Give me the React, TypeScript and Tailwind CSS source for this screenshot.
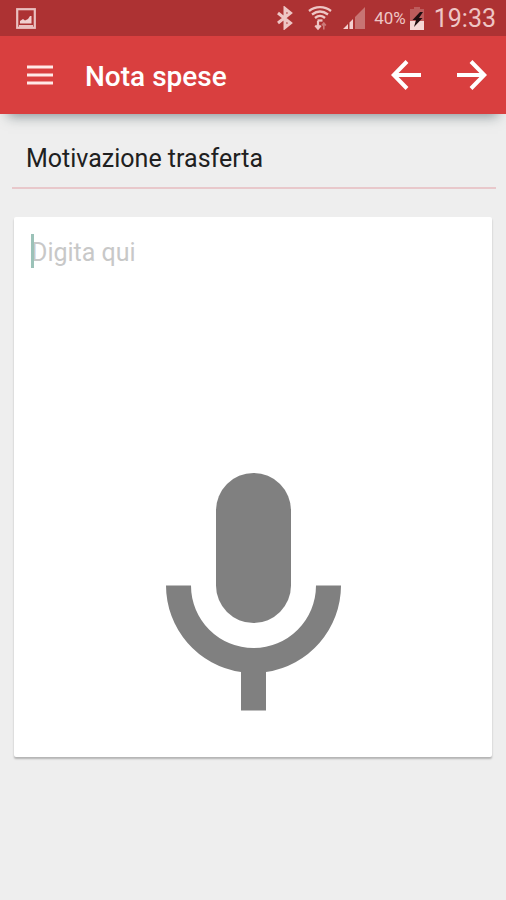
import { useState } from "react";

// Status bar icons
const PictureIcon = () => (
    <svg viewBox="0 0 20 21" className="w-5 h-[21px]" fill="none" aria-hidden="true">
        <rect x="1.2" y="1.2" width="17.6" height="18.6" stroke="#eac0c0" strokeWidth="2.2" />
        <path d="M4 15.500V13l3-2 2 1.500 3-1.500 2-3h1.500v7.500z" fill="#f0cfcf" />
        <path d="M3 18h14" stroke="#eac0c0" strokeWidth="2" />
    </svg>
);

const BluetoothIcon = () => (
    <svg viewBox="0 0 18 24" className="w-[18px] h-6" fill="none" stroke="#eec6c5" strokeWidth="3" aria-hidden="true">
        <path d="M2 7l12.500 10L9 21.500V2.500L14.500 7 2 17" />
    </svg>
);

const WifiIcon = () => (
    <svg viewBox="0 0 24 26" className="w-6 h-[26px]" fill="none" stroke="#eec6c5" strokeWidth="2.3" aria-hidden="true">
        <path d="M1 6C7.500 .8 16.500 .8 23 6" />
        <path d="M4 9.500C9 5.800 15 5.800 20 9.500" />
        <path d="M7 13C10 10.500 14 10.500 17 13" />
        <path d="M9.500 15.500h5" />
        <path d="M10 16v7M7.300 20.500l2.700 3 2.700-3" strokeWidth="2.200" />
        <path d="M15.800 24.500V19M13.800 20.500l2-2.500 2 2.500" stroke="#cc7a79" strokeWidth="1.600" />
    </svg>
);

const SignalIcon = () => (
    <svg viewBox="0 0 24 22" className="w-6 h-[22px]" aria-hidden="true">
        <path d="M13 22V10L23 0v22z" fill="#c87473" />
        <path d="M1 22l5-5v5zM7.500 22v-6.500l3.500-3.500v10z" fill="#f3d0cf" />
    </svg>
);

const BatteryIcon = () => (
    <svg viewBox="0 0 14 23" className="w-[14px] h-[23px]" aria-hidden="true">
        <path d="M4 0h6v2h4v21H0V2h4z" fill="#bd5c5c" />
        <path d="M0 14h14v9H0z" fill="#f6d8d7" />
        <path d="M10 5L2.500 13H6l-2 7 8.500-9H9l4-6z" fill="#1f0e10" />
    </svg>
);

// App bar icons
const MenuIcon = () => (
    <svg viewBox="0 0 26 20" className="w-[26px] h-5" fill="#ffe9e7" aria-hidden="true">
        <path d="M0 .5h26v3H0zM0 8.500h26v3H0zM0 16.500h26v3H0z" />
    </svg>
);

const ArrowIcon = ({ className = "" }: { className?: string }) => (
    <svg viewBox="0 0 30 30" className={`size-[30px] ${className}`} fill="none" stroke="#fff" strokeWidth="4" aria-hidden="true">
        <path d="M30 15H3M16 1.500L2.700 15l13.300 13.500" />
    </svg>
);

const MicIcon = () => (
    <svg viewBox="0 0 175 238" className="w-[175px] h-[238px]" fill="#808080" aria-hidden="true">
        <rect x="50" y="0" width="75" height="150" rx="37.500" />
        <path d="M0 112.500H25A62.500 62.500 0 0 0 150 112.500H175A87.500 87.500 0 0 1 100 199V237.500H75V199A87.500 87.500 0 0 1 0 112.500z" />
    </svg>
);

const StatusBar = () => (
    <div className="flex h-9 items-center bg-[#ad3233] pl-4 pr-2.5 text-[#eec6c5]">
        <PictureIcon />
        <div className="ml-auto flex items-center">
            <BluetoothIcon />
            <span className="ml-3.5"><WifiIcon /></span>
            <span className="ml-2.5"><SignalIcon /></span>
            <span className="ml-2 pt-0.5 text-[17px]">40%</span>
            <span className="ml-1"><BatteryIcon /></span>
            <span className="ml-2.5 pt-0.5 text-[25px]">19:33</span>
        </div>
    </div>
);

export default function App() {
    const [note, setNote] = useState("");

    return (
        <div className="flex min-h-screen flex-col bg-[#eeeeee] font-['Roboto',sans-serif]">
            <StatusBar />

            <header className="flex h-[78px] items-center bg-[#d93f3f] pl-[27px] pr-[19px] shadow-[0_10px_12px_-8px_rgba(60,80,85,0.6)]">
                <button type="button" aria-label="Menu">
                    <MenuIcon />
                </button>
                <h1 className="ml-8 pt-1 text-[28px] font-medium text-white">Nota spese</h1>
                <div className="ml-auto flex gap-9">
                    <button type="button" aria-label="Indietro">
                        <ArrowIcon />
                    </button>
                    <button type="button" aria-label="Avanti">
                        <ArrowIcon className="rotate-180" />
                    </button>
                </div>
            </header>

            <main>
                <div className="ml-3 mr-2.5 mt-[27px] border-b-2 border-[#e8c8cb] px-3.5 pb-2.5">
                    <label htmlFor="note" className="block text-[25px] leading-9 text-[#202020]">
                        Motivazione trasferta
                    </label>
                </div>

                <section className="relative mx-3.5 mt-7 flex flex-col items-center rounded-xs bg-white px-4 pt-[18px] pb-[46px] shadow-[0_2px_2px_rgba(0,0,0,0.25)]">
                    <textarea
                        id="note"
                        value={note}
                        onChange={(e) => setNote(e.target.value)}
                        placeholder="Digita qui"
                        className="h-[238px] w-full resize-none px-px text-[25px] leading-9 text-[#202020] caret-[#8fbcb0] outline-none placeholder:text-[#c8c8c8]"
                    />
                    {note === "" && <span className="pointer-events-none absolute left-[17px] top-[17px] h-[34px] w-[3px] bg-[#9bc2b8]" />}
                    <button type="button" aria-label="Detta nota">
                        <MicIcon />
                    </button>
                </section>
            </main>
        </div>
    );
}
